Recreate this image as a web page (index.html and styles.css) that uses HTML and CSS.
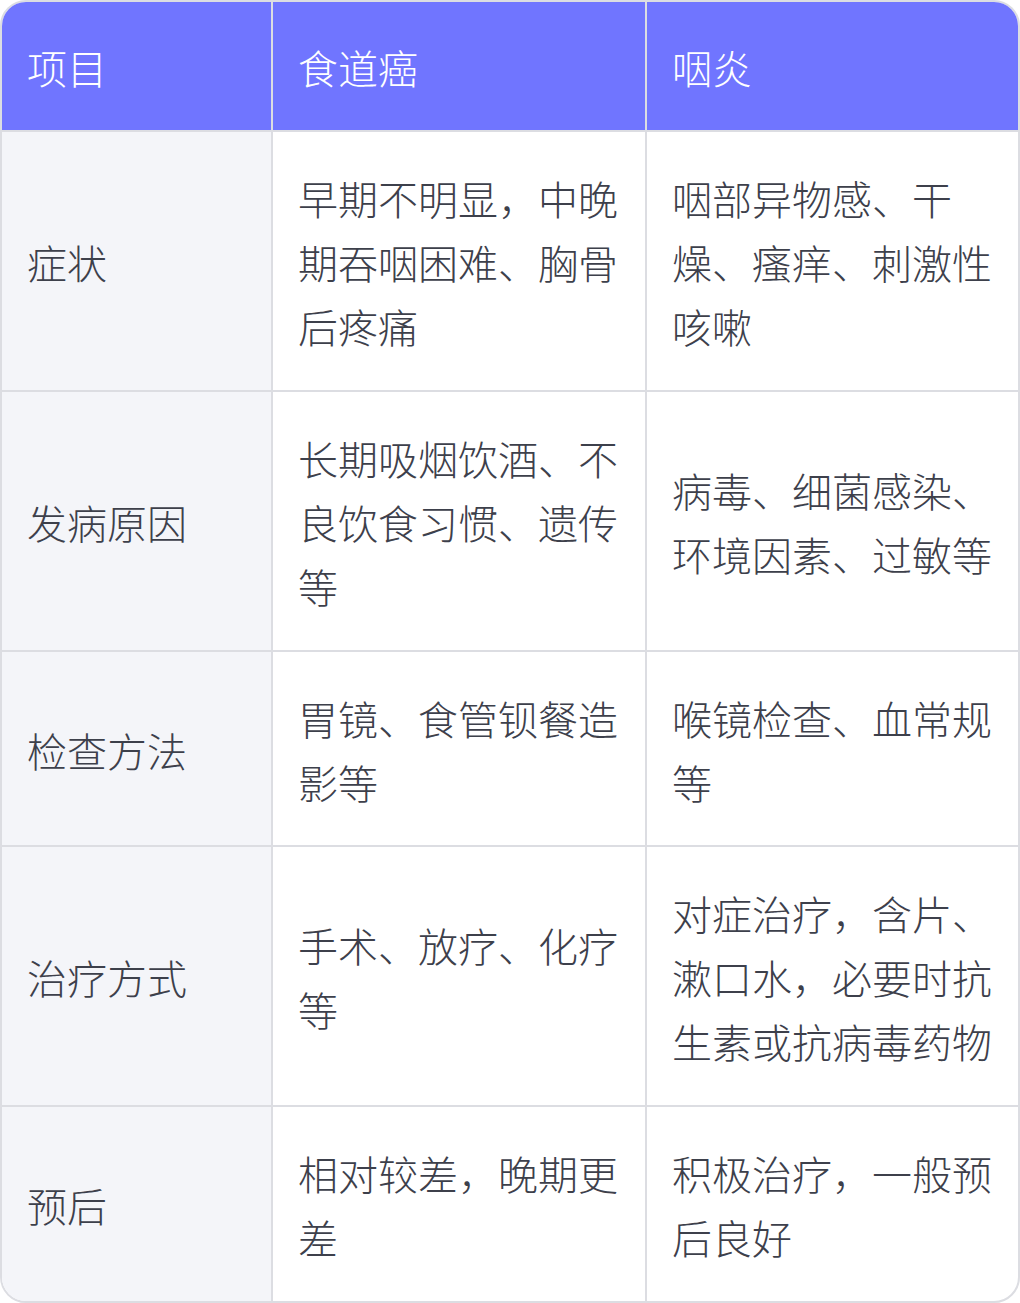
FILE: index.html
```html
<!DOCTYPE html>
<html lang="zh">
<head>
<meta charset="utf-8">
<link rel="stylesheet" href="styles.css">
</head>
<body>
<div class="wrap">
<table class="cmp">
<colgroup><col class="k1"><col class="k2"><col class="k3"></colgroup>
<thead>
<tr><th>项目</th><th>食道癌</th><th>咽炎</th></tr>
</thead>
<tbody>
<tr><td class="c1">症状</td><td>早期不明显，中晚期吞咽困难、胸骨后疼痛</td><td>咽部异物感、干燥、瘙痒、刺激性咳嗽</td></tr>
<tr><td class="c1">发病原因</td><td>长期吸烟饮酒、不良饮食习惯、遗传等</td><td>病毒、细菌感染、环境因素、过敏等</td></tr>
<tr class="short"><td class="c1">检查方法</td><td>胃镜、食管钡餐造影等</td><td>喉镜检查、血常规等</td></tr>
<tr><td class="c1">治疗方式</td><td>手术、放疗、化疗等</td><td>对症治疗，含片、漱口水，必要时抗生素或抗病毒药物</td></tr>
<tr><td class="c1">预后</td><td>相对较差，晚期更差</td><td>积极治疗，一般预后良好</td></tr>
</tbody>
</table>
</div>
</body>
</html>
```
FILE: styles.css
```css
html, body {
  margin: 0;
  padding: 0;
  background: #ffffff;
}
.wrap {
  width: 1020px;
  box-sizing: border-box;
  border: 2px solid #dcdde2;
  border-radius: 26px;
  overflow: hidden;
}
.cmp {
  width: 100%;
  border-collapse: separate;
  border-spacing: 0;
  table-layout: fixed;
  font-family: "Noto Sans CJK SC", "Noto Sans", sans-serif;
  font-size: 40px;
  font-weight: 300;
  line-height: 64px;
  color: #3d404b;
}
.k1 { width: 271px; }
.k2 { width: 374px; }
.cmp th, .cmp td {
  box-sizing: border-box;
  text-align: left;
  vertical-align: middle;
  padding: 34px 20px 32px 25px;
  border-right: 2px solid #dcdde2;
  border-bottom: 2px solid #dcdde2;
  word-break: break-all;
}
.cmp th {
  background: #7075ff;
  color: #ffffff;
  font-weight: 300;
  padding-top: 33px;
  padding-bottom: 31px;
}
.cmp tr.short td { padding-bottom: 31px; }
.cmp tr > :last-child { border-right: none; }
.cmp tbody tr:last-child td { border-bottom: none; }
.cmp td.c1 { background: #f4f5f9; }
```
